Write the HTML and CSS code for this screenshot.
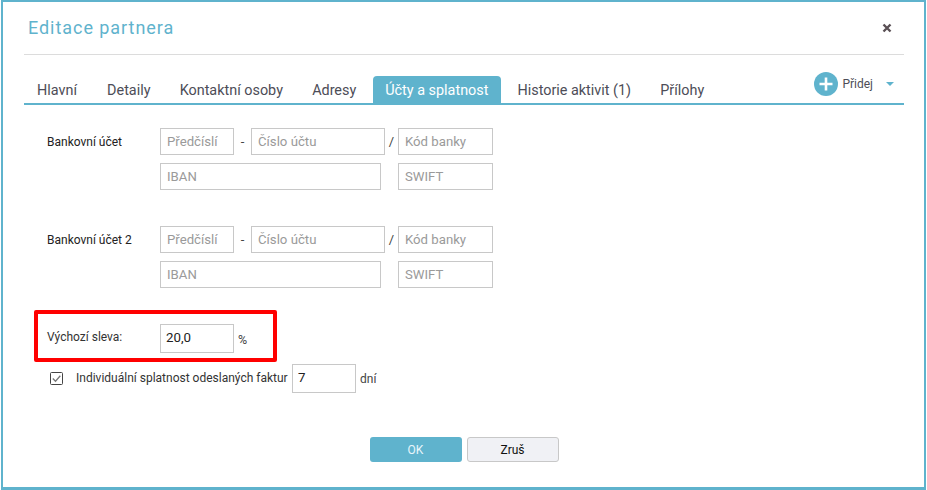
FILE: index.html
```html
<!DOCTYPE html>
<html lang="cs">
<head>
<meta charset="utf-8">
<title>Editace partnera</title>
<link rel="stylesheet" href="styles.css">
</head>
<body>
<div class="dialog">
  <header class="head">
    <h1 class="title">Editace partnera</h1>
    <svg class="close" width="10" height="10" viewBox="0 0 10 10"><path d="M1.5 1.5l7 7M8.500 1.500l-7 7" stroke="#5a5055" stroke-width="2.400" fill="none"/></svg>
  </header>
  <nav class="tabs">
    <a class="tab t1">Hlavní</a>
    <a class="tab">Detaily</a>
    <a class="tab">Kontaktní osoby</a>
    <a class="tab">Adresy</a>
    <a class="tab active">Účty a splatnost</a>
    <a class="tab">Historie aktivit (1)</a>
    <a class="tab">Přílohy</a>
    <div class="add">
      <svg class="plus" width="24" height="24" viewBox="0 0 24 24"><circle cx="12" cy="12" r="12" fill="#5fb3cd"/><path d="M12 5.500v13M5.500 12h13" stroke="#fff" stroke-width="2.600"/></svg>
      <span class="add-label">Přidej</span>
      <span class="caret"></span>
    </div>
  </nav>
  <section class="group first">
    <div class="row">
      <label class="lbl">Bankovní účet</label>
      <input class="in w74" placeholder="Předčíslí">
      <span class="sep dash">-</span>
      <input class="in w134" placeholder="Číslo účtu">
      <span class="sep slash">/</span>
      <input class="in w95" placeholder="Kód banky">
    </div>
    <div class="row r2">
      <span class="lbl"></span>
      <input class="in w221" placeholder="IBAN">
      <input class="in w95 swift" placeholder="SWIFT">
    </div>
  </section>
  <section class="group second">
    <div class="row">
      <label class="lbl">Bankovní účet 2</label>
      <input class="in w74" placeholder="Předčíslí">
      <span class="sep dash">-</span>
      <input class="in w134" placeholder="Číslo účtu">
      <span class="sep slash">/</span>
      <input class="in w95" placeholder="Kód banky">
    </div>
    <div class="row r2">
      <span class="lbl"></span>
      <input class="in w221" placeholder="IBAN">
      <input class="in w95 swift" placeholder="SWIFT">
    </div>
  </section>
  <section class="discount">
    <label class="lbl-d">Výchozí sleva:</label>
    <input class="in val w74 tall" value="20,0">
    <span class="pct">%</span>
  </section>
  <section class="due">
    <svg class="check" width="13" height="13" viewBox="0 0 13 13"><rect x="0.500" y="0.500" width="12" height="12" rx="1" fill="#fff" stroke="#444"/><path d="M2.800 6.500l2.700 2.700 4.800-5.400" fill="none" stroke="#777" stroke-width="1.300"/></svg>
    <label class="due-label">Individuální splatnost odeslaných faktur</label>
    <input class="in val w64 tall" value="7">
    <span class="days">dní</span>
  </section>
  <footer class="actions">
    <button class="btn ok">OK</button>
    <button class="btn cancel">Zruš</button>
  </footer>
</div>
</body>
</html>
```
FILE: styles.css
```css
* { box-sizing: border-box; }
html, body { margin: 0; padding: 0; background: #fff; }
body { width: 927px; height: 490px; overflow: hidden; font-family: Roboto, sans-serif; padding: 0 1px; }
.dialog {
  width: 925px; height: 490px;
  border: 2px solid #5fb3cd;
  border-bottom-width: 3px;
  background: #fff;
  padding: 0 20px 0 21px;
}
.head {
  box-sizing: content-box;
  height: 52px;
  border-bottom: 1px solid #dcdcdc;
  display: flex; align-items: center; justify-content: space-between;
  padding: 0 12px 0 4px;
}
.title { margin: 0; font-size: 18px; font-weight: 400; letter-spacing: 0.950px; color: #5fb3cd; line-height: 52px; }
.close { display: block; }
.tabs {
  margin-top: 21px;
  height: 29px;
  border-bottom: 2px solid #5fb3cd;
  display: flex; align-items: stretch;
  position: relative;
}
.tab { font-size: 14.400px; line-height: 29px; color: #4d4d57; padding: 0 14.600px; white-space: nowrap; }
.t1 { padding: 0 15.500px 0 13px; }
.active { margin: 0 2px; background: #5fb3cd; color: #fff; border-radius: 4px 4px 0 0; width: 128px; text-align: center; padding: 0; }
.add {
  position: absolute; right: 10px; top: -4px;
  display: flex; align-items: center; height: 24px;
}
.plus { display: block; }
.add-label { font-size: 12px; color: #4d4d57; margin-left: 4px; }
.caret { margin-left: 13px; width: 0; height: 0; border: 4px solid transparent; border-top: 4px solid #5fb3cd; border-bottom: 0; }
.group { padding-left: 23px; }
.first { margin-top: 23px; }
.second { margin-top: 36px; }
.row { display: flex; align-items: center; height: 27px; }
.r2 { margin-top: 8px; }
.lbl { width: 113px; font-size: 12px; color: #222; flex: none; }
.in {
  display: block; height: 27px; flex: none;
  border: 1px solid #c8c8c8; border-radius: 0;
  padding: 0 6px;
  font: 13.200px Roboto, sans-serif; color: #222; background: #fff; outline: none;
}
.in::placeholder { color: #9a9a9a; opacity: 1; }
.w74 { width: 74px; }
.w134 { width: 134px; }
.w95 { width: 95px; }
.w221 { width: 221px; }
.w64 { width: 64px; }
.tall { height: 29px; }
.val { font-size: 13.300px; padding: 0 5px 2px; }
.sep { flex: none; font-size: 13px; color: #444; text-align: center; }
.dash { width: 17px; }
.slash { width: 13px; }
.swift { margin-left: 17px; }
.discount {
  margin: 22px 0 0 10px;
  width: 243px; height: 52px;
  border: 4px solid #f00; border-radius: 2px;
  display: flex; align-items: center;
  padding: 5px 0 0 9px;
}
.lbl-d { width: 113px; flex: none; font-size: 12px; color: #333; position: relative; top: -2px; }
.pct { margin-left: 4px; font-size: 12.500px; color: #444; position: relative; top: 1px; }
.due { display: flex; align-items: center; margin: 2px 0 0 26px; height: 29px; }
.check { display: block; flex: none; }
.due-label { margin-left: 13px; font-size: 12px; color: #333; width: 216px; white-space: nowrap; position: relative; top: -1px; flex: none; }
.days { margin-left: 4px; font-size: 12px; color: #444; }
.actions { display: flex; justify-content: center; gap: 5px; margin-top: 44px; }
.btn { width: 92px; height: 25px; border-radius: 3px; font: 12px Roboto, sans-serif; padding: 0; }
.ok { background: #5fb3cd; border: 0; color: #e8f6fb; }
.cancel { background: #f0f1f5; border: 1px solid #c8c8c8; color: #111; }
```
